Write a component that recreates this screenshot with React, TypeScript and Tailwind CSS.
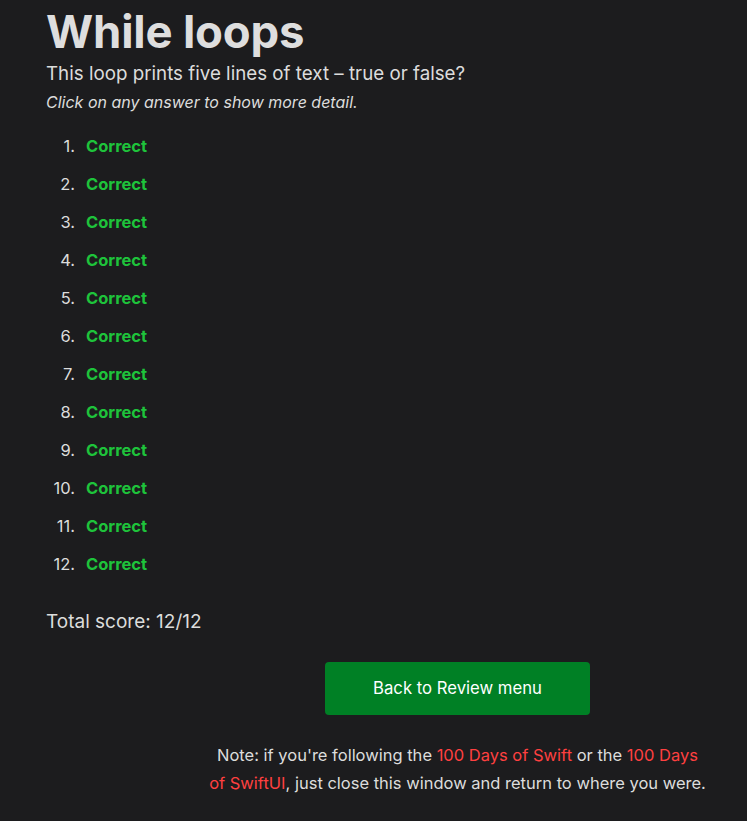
import React from 'react';

const answers = Array.from({ length: 12 }, (_, i) => i + 1);

const App = () => {
    return (
        <div className="min-h-[821px] bg-[#1c1c1e] text-[#dcdcdc] font-['Inter',sans-serif]">
            <div className="px-[46px] pt-[6px]">
                <h1 className="text-[45.5px] leading-[52px] font-bold text-[#dedede] tracking-[-0.2px]">While loops</h1>
                <p className="mt-[3px] text-[18.75px] leading-[26px]">This loop prints five lines of text – true or false?</p>
                <p className="mt-[3px] text-[16px] leading-[24px] italic">Click on any answer to show more detail.</p>

                <ol className="mt-[13px]">
                    {answers.map((n) => (
                        <li key={n} className="flex items-center h-[38px] text-[16.5px] leading-[38px]">
                            <span className="w-[29px] text-right">{n}.</span>
                            <span className="ml-[11px] font-bold text-[#1ec33b] cursor-pointer">Correct</span>
                        </li>
                    ))}
                </ol>

                <p className="mt-[26px] text-[19px] leading-[26px]">Total score: 12/12</p>
            </div>

            <div className="pl-[168px] flex flex-col items-center">
                <button className="mt-[27px] w-[265px] h-[53px] rounded-[4px] bg-[#008025] text-white text-[16.7px]">
                    Back to Review menu
                </button>
                <p className="mt-[26px] w-[498px] text-center text-[16.5px] leading-[28px]">
                    Note: if you're following the <a className="text-[#ff4040]">100 Days of Swift</a> or the{' '}
                    <a className="text-[#ff4040]">100 Days of SwiftUI</a>, just close this window and return to where you were.
                </p>
            </div>
        </div>
    );
};

export default App;
